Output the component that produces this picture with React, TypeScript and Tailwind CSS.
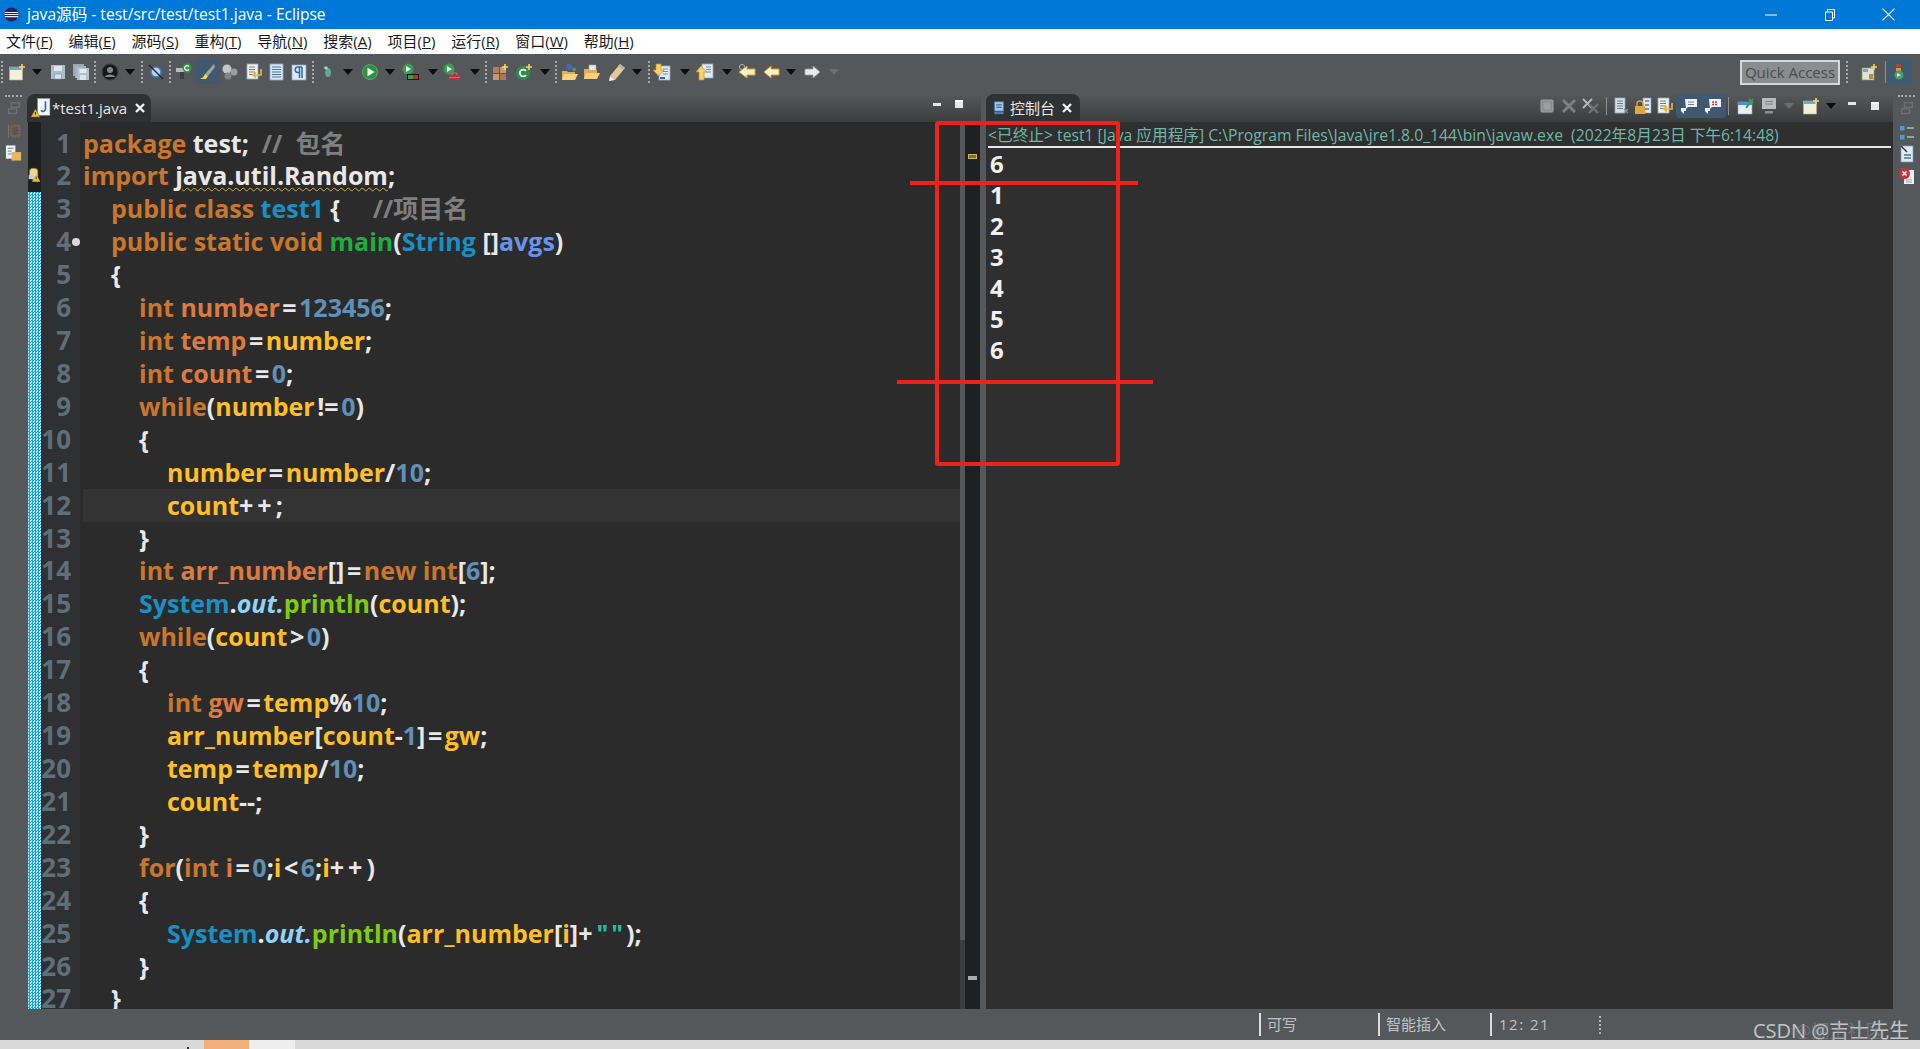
import type { ReactNode } from "react";

const UI_FONT = "font-['Open_Sans','Noto_Sans_CJK_SC',sans-serif]";
const CODE_FONT = "font-['Open_Sans','Noto_Sans_CJK_SC',sans-serif]";

function Svg({ children, className = "w-[18px] h-[18px]" }: { children: ReactNode; className?: string }) {
  return (
    <svg viewBox="0 0 18 18" className={`shrink-0 ${className}`}>
      {children}
    </svg>
  );
}

const Star = ({ x = 14, y = 4 }: { x?: number; y?: number }) => (
  <path d={`M${x} ${y - 3}v6M${x - 3} ${y}h6`} stroke="#f6d860" strokeWidth="1.6" />
);

const Doc = ({ x = 3, y = 2, w = 11, h = 14, fill = "#eef2f6" }: { x?: number; y?: number; w?: number; h?: number; fill?: string }) => (
  <rect x={x} y={y} width={w} height={h} fill={fill} stroke="#9aa7b5" strokeWidth="0.8" />
);

const Lines = ({ x = 5, y = 5, w = 7, n = 4, color = "#6d8fb5" }: { x?: number; y?: number; w?: number; n?: number; color?: string }) => (
  <path d={Array.from({ length: n }, (_, i) => `M${x} ${y + i * 2.5}h${w}`).join("")} stroke={color} strokeWidth="1" />
);

const ICONS: Record<string, ReactNode> = {
  newDoc: (
    <Svg>
      <rect x="1.5" y="4" width="13" height="13" fill="#f3f0d8" stroke="#b9b28a" strokeWidth="0.6" />
      <rect x="1.5" y="4" width="13" height="3" fill="#6fa6dc" />
      <Star />
    </Svg>
  ),
  save: (
    <Svg>
      <rect x="2" y="2" width="14" height="14" fill="#a9bdd2" />
      <rect x="5" y="3" width="8" height="5" fill="#e4e8ec" />
      <rect x="5.5" y="11" width="7" height="5" fill="#dfe3e7" stroke="#7f93a8" strokeWidth="0.7" />
    </Svg>
  ),
  saveAll: (
    <Svg>
      <rect x="1" y="1" width="11" height="12" fill="#9ca7b2" />
      <rect x="3" y="3" width="11" height="12" fill="#a4b2c0" />
      <rect x="5" y="5" width="12" height="12" fill="#afc0d2" />
      <rect x="7.5" y="6" width="7" height="4" fill="#e4e8ec" />
      <rect x="8" y="12" width="6" height="5" fill="#dfe3e7" />
    </Svg>
  ),
  person: (
    <Svg>
      <circle cx="9" cy="9" r="8" fill="#17181a" stroke="#3b3d3f" />
      <circle cx="9" cy="7" r="3" fill="#85888b" />
      <path d="M3.8 14c1-3.4 9.4-3.4 10.4 0" fill="#85888b" />
    </Svg>
  ),
  skip: (
    <Svg>
      <circle cx="9" cy="9" r="5" fill="#b8d3ee" stroke="#3f7fc0" strokeWidth="1.6" />
      <path d="M2 2l14 14" stroke="#23262a" strokeWidth="1.3" />
    </Svg>
  ),
  gear: (
    <Svg>
      <rect x="1" y="5" width="9" height="4" fill="#b9bcbf" />
      <rect x="5" y="9" width="4" height="7" fill="#3c3e40" />
      <circle cx="12" cy="5" r="4.5" fill="#2e9b4a" />
      <path d="M14 3.6a2.4 2.4 0 1 0 0 2.8" fill="none" stroke="#fff" strokeWidth="1.2" />
    </Svg>
  ),
  blobs: (
    <Svg>
      <circle cx="6" cy="6" r="4.5" fill="#c4c6c8" />
      <circle cx="13" cy="9" r="3.5" fill="#9a9c9e" />
      <circle cx="7" cy="13" r="3.5" fill="#828486" />
    </Svg>
  ),
  docArrow: (
    <Svg>
      <Doc x={2} y={1} w={11} h={15} />
      <Lines x={4} y={4} w={6} n={4} color="#8a7a55" />
      <path d="M16 6v6h-7M11 9.5L8 12l3 2.5" fill="none" stroke="#e7b53c" strokeWidth="1.7" />
    </Svg>
  ),
  docList: (
    <Svg>
      <Doc x={3} y={1} w={13} h={16} fill="#d7e6f5" />
      <Lines x={5} y={4} w={9} n={5} color="#4b79ad" />
    </Svg>
  ),
  pilcrow: (
    <Svg>
      <rect x="2" y="2" width="14" height="15" fill="#dce9f6" stroke="#8fa7c0" strokeWidth="0.7" />
      <path d="M12 4H8a2.8 2.8 0 0 0 0 5.6h1M9.5 4v11M12 4v11" fill="none" stroke="#2f6aa8" strokeWidth="1.5" />
    </Svg>
  ),
  bug: (
    <Svg>
      <ellipse cx="9" cy="9.5" rx="3" ry="4.5" fill="#5fa899" />
      <circle cx="7" cy="5" r="1.8" fill="#9fd0c4" />
      <path d="M4 6l3 2M4 14l3-2M14 8l-2 1M14 13l-2-1" stroke="#2e6f63" strokeWidth="1" />
    </Svg>
  ),
  run: (
    <Svg>
      <circle cx="9" cy="9" r="7.5" fill="#2f8f48" stroke="#5db470" strokeWidth="0.8" />
      <path d="M6.5 4.5L13.5 9l-7 4.5z" fill="#eefbe8" />
    </Svg>
  ),
  coverage: (
    <Svg>
      <circle cx="6" cy="6" r="5.5" fill="#3b9a54" />
      <path d="M4 3l5 3-5 3z" fill="#eefbe8" />
      <rect x="5" y="11" width="12" height="6" fill="#111" />
      <rect x="6" y="12" width="5" height="4" fill="#29a83c" />
      <rect x="11" y="12" width="5" height="4" fill="#cc2a2a" />
    </Svg>
  ),
  external: (
    <Svg>
      <circle cx="6" cy="6" r="5.5" fill="#3b9a54" />
      <path d="M4 3l5 3-5 3z" fill="#eefbe8" />
      <rect x="6" y="12" width="11" height="5" rx="1" fill="#c82c35" />
      <path d="M9 12v-2h5v2M6 14.5h11" fill="none" stroke="#e4676d" strokeWidth="1" />
    </Svg>
  ),
  pkg: (
    <Svg>
      <rect x="2" y="4" width="6" height="6" fill="#b07f5c" />
      <rect x="9" y="4" width="6" height="6" fill="#c79770" />
      <rect x="2" y="11" width="6" height="6" fill="#c79770" />
      <rect x="9" y="11" width="6" height="6" fill="#a97856" />
      <Star />
    </Svg>
  ),
  newClass: (
    <Svg>
      <circle cx="8" cy="10" r="7" fill="#2e8b4d" />
      <path d="M11 8a3.4 3.4 0 1 0 0 4" fill="none" stroke="#fff" strokeWidth="1.7" />
      <Star x={14} y={4} />
    </Svg>
  ),
  openProject: (
    <Svg>
      <circle cx="8" cy="4" r="3" fill="#4f62b8" />
      <circle cx="13" cy="6.5" r="2" fill="#3f9a70" />
      <path d="M1 8h5l1 1h7v7H1z" fill="#e0ad55" />
      <path d="M3 11h14l-3 6H1z" fill="#f5d27e" />
    </Svg>
  ),
  openFolder: (
    <Svg>
      <rect x="6" y="2" width="7" height="6" fill="#e8eef4" stroke="#93a5b8" strokeWidth="0.6" />
      <path d="M1 6h5l1 1h7v9H1z" fill="#e0ad55" />
      <path d="M3 10h14l-3 6H1z" fill="#f5d27e" />
    </Svg>
  ),
  pencil: (
    <Svg>
      <path d="M12 1l5 4L7 17l-5-4z" fill="#e3c89b" />
      <path d="M12 1l5 4-2 2-5-4z" fill="#b9b2a4" />
      <path d="M2 13l5 4-6 1z" fill="#f7f7e0" />
    </Svg>
  ),
  docDown: (
    <Svg>
      <Doc x={6} y={3} w={11} h={14} fill="#dfe9f3" />
      <Lines x={10} y={6} w={5} n={3} color="#6d8fb5" />
      <rect x="7" y="14" width="5" height="2" fill="#2f6aa8" />
      <path d="M3 1h5v6h3l-5.5 6L0 7h3z" fill="#f6d26a" stroke="#c98d1f" strokeWidth="0.7" />
    </Svg>
  ),
  docUp: (
    <Svg>
      <Doc x={6} y={1} w={11} h={14} fill="#dfe9f3" />
      <Lines x={10} y={4} w={5} n={3} color="#6d8fb5" />
      <path d="M5 3l5.5 6H8v8H3V9H0z" fill="#f6d26a" stroke="#c98d1f" strokeWidth="0.7" />
    </Svg>
  ),
  backEdit: (
    <Svg>
      <circle cx="4" cy="4" r="2.6" fill="none" stroke="#9fb0c0" strokeWidth="1" />
      <path d="M9 3v3h8v6H9v3L1 9z" fill="#faf2c8" stroke="#d99a2b" strokeWidth="1" />
    </Svg>
  ),
  back: (
    <Svg>
      <path d="M9 3v3h8v6H9v3L2 9z" fill="#faf2c8" stroke="#d99a2b" strokeWidth="1" />
    </Svg>
  ),
  forward: (
    <Svg>
      <path d="M9 3v3H1v6h8v3l7-6z" fill="#e8ebed" stroke="#9a9da0" strokeWidth="0.8" />
    </Svg>
  ),
  perspective: (
    <Svg>
      <rect x="2" y="5" width="12" height="12" fill="#dfe3d0" stroke="#8c9078" strokeWidth="0.7" />
      <rect x="3" y="6" width="5" height="3" fill="#6fa6dc" />
      <rect x="9" y="11" width="4" height="5" fill="#b08a50" />
      <Star />
    </Svg>
  ),
  debugPersp: (
    <Svg>
      <rect x="5" y="1" width="5" height="3" fill="#a94b3c" />
      <rect x="5" y="5" width="5" height="3" fill="#c9a13f" />
      <circle cx="8" cy="12" r="4.5" fill="#4f9a6a" />
      <path d="M6 10l4 2-4 2z" fill="#d9e6f5" />
    </Svg>
  ),
  terminate: (
    <Svg>
      <rect x="3" y="3" width="12" height="12" rx="1" fill="#8b8d8f" stroke="#a2a4a6" />
      <rect x="5.5" y="5.5" width="7" height="7" fill="#9c9ea0" />
    </Svg>
  ),
  remove: (
    <Svg>
      <path d="M3 3l12 12M15 3L3 15" stroke="#7d7f81" strokeWidth="3" />
    </Svg>
  ),
  removeAll: (
    <Svg>
      <path d="M1 2l9 9M10 2l-9 9" stroke="#b4b6b8" strokeWidth="2" />
      <path d="M7 7l9 9M16 7l-9 9" stroke="#6f7173" strokeWidth="2.4" />
    </Svg>
  ),
  docClear: (
    <Svg>
      <Doc x={3} y={1} w={10} h={15} fill="#d5dee8" />
      <Lines x={5} y={4} w={6} n={4} color="#5d7c9c" />
      <path d="M12 12l4 4M16 12l-4 4" stroke="#8c8e90" strokeWidth="1.2" />
    </Svg>
  ),
  lock: (
    <Svg>
      <rect x="9" y="1" width="8" height="15" fill="#e1e7ee" stroke="#8fa0b2" strokeWidth="0.6" />
      <path d="M11 4h4M11 8h4M11 12h4" stroke="#5d7c9c" strokeWidth="1.5" />
      <path d="M3 9V7a3 3 0 0 1 6 0v2" fill="none" stroke="#d5a04a" strokeWidth="1.4" />
      <rect x="1" y="9" width="10" height="8" fill="#e2a83c" />
    </Svg>
  ),
  commentOut: (
    <Svg>
      <path d="M5 2h12v8H8l-2 2z" fill="#f2f6fa" />
      <path d="M8 5h6M8 7.5h6" stroke="#5b86b3" strokeWidth="1" />
      <path d="M1 11h5v3H4v3l-3-3z" fill="#f2f6fa" />
    </Svg>
  ),
  commentErr: (
    <Svg>
      <path d="M5 2h12v8H8l-2 2z" fill="#f2f6fa" />
      <path d="M8 5h6M8 7.5h6" stroke="#d2303a" strokeWidth="1.6" strokeDasharray="2 1" />
      <path d="M1 11h5v3H4v3l-3-3z" fill="#f2f6fa" />
    </Svg>
  ),
  pin: (
    <Svg>
      <rect x="1" y="5" width="14" height="12" fill="#e8f0f8" stroke="#8fa7c0" strokeWidth="0.6" />
      <rect x="1" y="5" width="14" height="3" fill="#4f8fd0" />
      <path d="M9 11l7-9M12 2l4 4" stroke="#35a04e" strokeWidth="2" />
    </Svg>
  ),
  monitor: (
    <Svg>
      <rect x="2" y="1" width="14" height="11" fill="#b9bcbf" />
      <path d="M5 4.5h8M5 7h8" stroke="#7f8184" strokeWidth="1" />
      <rect x="5" y="14" width="8" height="2.5" fill="#8b8d8f" />
    </Svg>
  ),
  consoleTab: (
    <Svg className="w-[14px] h-[16px]">
      <rect x="3" y="1" width="12" height="12" fill="#a6c4e6" stroke="#3c6ea6" strokeWidth="1" />
      <path d="M5.5 5h7M5.5 8h7" stroke="#1f4f85" strokeWidth="1.2" />
      <rect x="3" y="14" width="12" height="3" fill="#4b7db5" />
    </Svg>
  ),
  javaFile: (
    <Svg className="w-[20px] h-[22px]">
      <rect x="6" y="0.5" width="11" height="15" fill="#f3f6fa" stroke="#8fa0b2" strokeWidth="0.5" />
      <path d="M13 3v7c0 2.5-3 2.5-4 1" fill="none" stroke="#2f6fb5" strokeWidth="1.5" />
      <path d="M0 17L4 10l4 7z" fill="#f2c24a" stroke="#7b5c14" strokeWidth="0.5" />
      <path d="M4 12.5v2.5" stroke="#333" strokeWidth="1" />
    </Svg>
  ),
  warn: (
    <Svg className="w-[15px] h-[18px]">
      <rect x="3" y="1" width="10" height="13" rx="4" fill="#efd98f" stroke="#8a7742" strokeWidth="0.8" />
      <rect x="2" y="9" width="7" height="5" fill="#c8cfd6" />
      <path d="M11 8l5 9H6z" fill="#f2b83a" />
      <path d="M11 11v3" stroke="#333" strokeWidth="1" />
    </Svg>
  ),
  dimRestore: (
    <Svg className="w-[16px] h-[16px]">
      <rect x="6" y="2" width="9" height="5" fill="none" stroke="#6f7275" strokeWidth="1.4" />
      <rect x="3" y="9" width="9" height="5" fill="none" stroke="#6f7275" strokeWidth="1.4" />
    </Svg>
  ),
  rail1: (
    <Svg className="w-[16px] h-[18px]">
      <path d="M3 2v14" stroke="#7b7e81" strokeWidth="1" />
      <rect x="6" y="3" width="9" height="12" fill="none" stroke="#8a5f45" strokeWidth="3" strokeDasharray="2 1" />
    </Svg>
  ),
  railPkg: (
    <Svg className="w-[17px] h-[18px]">
      <rect x="1" y="1" width="10" height="14" fill="#eef2f6" />
      <path d="M3 4h6M3 7h4M3 10h4" stroke="#5d7c9c" strokeWidth="1" />
      <rect x="7" y="8" width="10" height="9" fill="#e8b860" />
    </Svg>
  ),
  outline: (
    <Svg>
      <rect x="2" y="2" width="4.5" height="4.5" fill="#4b97e0" />
      <rect x="2" y="11" width="4.5" height="4.5" fill="#4b97e0" />
      <path d="M9 4h7M9 13h7" stroke="#dce8f4" strokeWidth="1.2" />
    </Svg>
  ),
  javadoc: (
    <Svg>
      <rect x="3" y="1" width="12" height="16" fill="#dfeaf5" stroke="#7f9ab5" strokeWidth="0.7" />
      <path d="M3 1l6 6" stroke="#333" strokeWidth="1.4" />
      <path d="M6 10h7M6 13h7" stroke="#4b79ad" strokeWidth="1.3" />
    </Svg>
  ),
  problems: (
    <Svg>
      <rect x="6" y="3" width="10" height="14" fill="#eef2f6" />
      <path d="M8 13h6M8 15h6" stroke="#9aa7b5" strokeWidth="1" />
      <circle cx="6.5" cy="6.5" r="5.5" fill="#c83238" />
      <path d="M4.5 4.5l4 4M8.5 4.5l-4 4" stroke="#fff" strokeWidth="1.4" />
    </Svg>
  ),
};

function Arrow({ dim = false }: { dim?: boolean }) {
  return (
    <svg viewBox="0 0 10 6" className="w-[10px] h-[6px] shrink-0">
      <path d="M0 0h10L5 6z" fill={dim ? "#6b6e71" : "#0c0c0c"} />
    </svg>
  );
}

function Sep() {
  return <div className="w-[2px] h-[22px] shrink-0 border-l-2 border-dotted border-[#a6a8aa]" />;
}

type ToolItem = { kind: string; ml: string };

const TOOLBAR: ToolItem[] = [
  { kind: "sep", ml: "ml-[1px]" },
  { kind: "newDoc", ml: "ml-[5px]" },
  { kind: "arrow", ml: "ml-[6px]" },
  { kind: "save", ml: "ml-[7px]" },
  { kind: "saveAll", ml: "ml-[5px]" },
  { kind: "sep", ml: "ml-[4px]" },
  { kind: "person", ml: "ml-[5px]" },
  { kind: "arrow", ml: "ml-[6px]" },
  { kind: "sep", ml: "ml-[6px]" },
  { kind: "skip", ml: "ml-[4px]" },
  { kind: "sep", ml: "ml-[4px]" },
  { kind: "gear", ml: "ml-[4px]" },
  { kind: "brushOn", ml: "ml-[3px]" },
  { kind: "blobs", ml: "ml-[1px]" },
  { kind: "docArrow", ml: "ml-[6px]" },
  { kind: "docList", ml: "ml-[4px]" },
  { kind: "pilcrow", ml: "ml-[5px]" },
  { kind: "sep", ml: "ml-[4px]" },
  { kind: "bug", ml: "ml-[5px]" },
  { kind: "arrow", ml: "ml-[6px]" },
  { kind: "run", ml: "ml-[8px]" },
  { kind: "arrow", ml: "ml-[6px]" },
  { kind: "coverage", ml: "ml-[7px]" },
  { kind: "arrow", ml: "ml-[8px]" },
  { kind: "external", ml: "ml-[5px]" },
  { kind: "arrow", ml: "ml-[9px]" },
  { kind: "sep", ml: "ml-[5px]" },
  { kind: "pkg", ml: "ml-[4px]" },
  { kind: "newClass", ml: "ml-[6px]" },
  { kind: "arrow", ml: "ml-[7px]" },
  { kind: "sep", ml: "ml-[5px]" },
  { kind: "openProject", ml: "ml-[4px]" },
  { kind: "openFolder", ml: "ml-[4px]" },
  { kind: "pencil", ml: "ml-[7px]" },
  { kind: "arrow", ml: "ml-[6px]" },
  { kind: "sep", ml: "ml-[6px]" },
  { kind: "docDown", ml: "ml-[3px]" },
  { kind: "arrow", ml: "ml-[9px]" },
  { kind: "docUp", ml: "ml-[6px]" },
  { kind: "arrow", ml: "ml-[8px]" },
  { kind: "backEdit", ml: "ml-[6px]" },
  { kind: "back", ml: "ml-[6px]" },
  { kind: "arrow", ml: "ml-[6px]" },
  { kind: "forward", ml: "ml-[8px]" },
  { kind: "arrowDim", ml: "ml-[7px]" },
];

function ToolIcon({ kind }: { kind: string }) {
  if (kind === "sep") return <Sep />;
  if (kind === "arrow") return <Arrow />;
  if (kind === "arrowDim") return <Arrow dim />;
  if (kind === "brushOn") {
    return (
      <div className="w-[24px] h-[24px] flex items-center justify-center bg-[#3f5a70]">
        <Svg>
          <path d="M15 1L6 11l3 2 7-9z" fill="#a4a68f" />
          <path d="M6 11l3 2-2 3H1c3-1 4-3 5-5z" fill="#f1d94c" />
        </Svg>
      </div>
    );
  }
  return <>{ICONS[kind]}</>;
}

const MENUS = [
  ["文件", "F"],
  ["编辑", "E"],
  ["源码", "S"],
  ["重构", "T"],
  ["导航", "N"],
  ["搜索", "A"],
  ["项目", "P"],
  ["运行", "R"],
  ["窗口", "W"],
  ["帮助", "H"],
];

// token colours of the dark Eclipse theme
const C = {
  kw: "text-[#c9772f]",
  decl: "text-[#dc7a41]",
  id: "text-[#ffbf26]",
  op: "text-[#e8e8e8]",
  eq: "text-[#e8e8e8] px-[2.5px]",
  plus: "text-[#e8e8e8] tracking-[4px]",
  num: "text-[#5f90b8]",
  cm: "text-[#7f7f7f]",
  cls: "text-[#1a8fc4]",
  main: "text-[#1fae3e]",
  arg: "text-[#6a92e8]",
  out: "text-[#8fd3fa] italic",
  call: "text-[#7ecb14]",
  str: "text-[#17c4a0] tracking-[3px]",
};

type Token = [string, string];
type Line = { indent: number; tokens: Token[] };

const CODE: Line[] = [
  { indent: 0, tokens: [["package ", C.kw], ["test;", C.op], ["  //  包名", C.cm]] },
  { indent: 0, tokens: [["import ", C.kw], ["java.util.Random", "squiggle"], [";", C.op]] },
  { indent: 1, tokens: [["public class ", C.kw], ["test1 ", C.cls], ["{", C.op], ["     //项目名", C.cm]] },
  { indent: 1, tokens: [["public static void ", C.kw], ["main", C.main], ["(", C.op], ["String ", C.cls], ["[]", C.op], ["avgs", C.arg], [")", C.op]] },
  { indent: 1, tokens: [["{", C.op]] },
  { indent: 2, tokens: [["int ", C.kw], ["number", C.decl], ["=", C.eq], ["123456", C.num], [";", C.op]] },
  { indent: 2, tokens: [["int ", C.kw], ["temp", C.decl], ["=", C.eq], ["number", C.id], [";", C.op]] },
  { indent: 2, tokens: [["int ", C.kw], ["count", C.decl], ["=", C.eq], ["0", C.num], [";", C.op]] },
  { indent: 2, tokens: [["while", C.kw], ["(", C.op], ["number", C.id], ["!=", C.eq], ["0", C.num], [")", C.op]] },
  { indent: 2, tokens: [["{", C.op]] },
  { indent: 3, tokens: [["number", C.id], ["=", C.eq], ["number", C.id], ["/", C.op], ["10", C.num], [";", C.op]] },
  { indent: 3, tokens: [["count", C.id], ["++", C.plus], [";", C.op]] },
  { indent: 2, tokens: [["}", C.op]] },
  { indent: 2, tokens: [["int ", C.kw], ["arr_number", C.decl], ["[]", C.op], ["=", C.eq], ["new int", C.kw], ["[", C.op], ["6", C.num], ["];", C.op]] },
  { indent: 2, tokens: [["System", C.cls], [".", C.op], ["out", C.out], [".", C.out], ["println", C.call], ["(", C.op], ["count", C.id], [");", C.op]] },
  { indent: 2, tokens: [["while", C.kw], ["(", C.op], ["count", C.id], [">", C.eq], ["0", C.num], [")", C.op]] },
  { indent: 2, tokens: [["{", C.op]] },
  { indent: 3, tokens: [["int ", C.kw], ["gw", C.decl], ["=", C.eq], ["temp", C.id], ["%", C.op], ["10", C.num], [";", C.op]] },
  { indent: 3, tokens: [["arr_number", C.id], ["[", C.op], ["count", C.id], ["-", C.op], ["1", C.num], ["]", C.op], ["=", C.eq], ["gw", C.id], [";", C.op]] },
  { indent: 3, tokens: [["temp", C.id], ["=", C.eq], ["temp", C.id], ["/", C.op], ["10", C.num], [";", C.op]] },
  { indent: 3, tokens: [["count", C.id], ["--;", C.op]] },
  { indent: 2, tokens: [["}", C.op]] },
  { indent: 2, tokens: [["for", C.kw], ["(", C.op], ["int ", C.kw], ["i", C.decl], ["=", C.eq], ["0", C.num], [";", C.op], ["i", C.id], ["<", C.eq], ["6", C.num], [";", C.op], ["i", C.id], ["++", C.plus], [")", C.op]] },
  { indent: 2, tokens: [["{", C.op]] },
  { indent: 3, tokens: [["System", C.cls], [".", C.op], ["out", C.out], [".", C.out], ["println", C.call], ["(", C.op], ["arr_number", C.id], ["[", C.op], ["i", C.id], ["]", C.op], ["+", C.plus], ['""', C.str], [");", C.op]] },
  { indent: 2, tokens: [["}", C.op]] },
  { indent: 1, tokens: [["}", C.op]] },
];

const INDENT = ["pl-0", "pl-[28px]", "pl-[56px]", "pl-[84px]"];
const HATCH =
  "bg-[repeating-conic-gradient(#1f9fd2_0_25%,#b5e6f5_0_50%)] [background-size:3px_3px]";

function CodeLine({ line, current }: { line: Line; current: boolean }) {
  return (
    <div className={`h-[32.93px] leading-[32.93px] whitespace-pre ${INDENT[line.indent]} ${current ? "bg-[#333333]" : ""}`}>
      {line.tokens.map(([text, cls], i) =>
        cls === "squiggle" ? (
          <span key={i} className="text-[#e8e8e8] underline decoration-wavy decoration-[#c9b152] decoration-1 underline-offset-2">
            {text}
          </span>
        ) : (
          <span key={i} className={cls}>
            {text}
          </span>
        )
      )}
    </div>
  );
}

function Editor() {
  return (
    <div className="w-[954px] flex flex-col">
      <div className="h-[28px] flex items-stretch bg-gradient-to-b from-[#55585a] to-[#3c3d3f] rounded-tl-lg">
        <div className="w-[124px] rounded-t-lg bg-[#2e3032] flex items-center pl-[4px] text-[15px] text-[#e6e6e6]">
          {ICONS.javaFile}
          <span className="ml-[1px]">*test1.java</span>
          <svg viewBox="0 0 10 10" className="w-[10px] h-[10px] ml-[8px]">
            <path d="M1 1l8 8M9 1L1 9" stroke="#f0f0f0" strokeWidth="2.4" />
          </svg>
        </div>
        <div className="flex-1" />
        <div className="flex items-center gap-[14px] pr-[18px] pb-[8px]">
          <div className="w-[8px] h-[3px] bg-[#e6e6e6]" />
          <div className="w-[8px] h-[8px] bg-[#e6e6e6] border-t-2 border-[#fff]" />
        </div>
      </div>
      <div className={`flex-1 flex bg-[#2b2b2b] overflow-hidden ${CODE_FONT} text-[25px] font-bold`}>
        <div className="w-[1px] bg-[#55585b]" />
        <div className="w-[13px] flex flex-col">
          <div className="h-[70px] bg-[#1d1f20] flex items-end justify-center pb-[8px]">{ICONS.warn}</div>
          <div className={`flex-1 ${HATCH}`} />
        </div>
        <div className="w-[39px] bg-[#2e3032] pt-[4.5px] text-[#5f6f79] relative text-[26px]">
          {CODE.map((_, i) => (
            <div key={i} className="h-[32.93px] leading-[32.93px] text-right pr-[9px]">
              {i + 1}
            </div>
          ))}
          <div className="absolute left-[31px] top-[116px] w-[8px] h-[8px] rounded-full bg-[#d9dcdf]" />
        </div>
        <div className="flex-1 min-w-0 pl-[3px] pt-[4.5px] overflow-hidden">
          {CODE.map((line, i) => (
            <CodeLine key={i} line={line} current={i === 11} />
          ))}
        </div>
        <div className="w-[5px] flex flex-col">
          <div className="h-[818px] bg-[#55585a]" />
          <div className="flex-1 bg-[#3b3d3f]" />
        </div>
        <div className="w-[15px] bg-[#1e2021] flex flex-col items-center">
          <div className="mt-[32px] w-[9px] h-[5px] border border-[#c9b850] bg-[#7d7430]" />
          <div className="mt-[817px] w-[9px] h-[4px] bg-[#a8abae]" />
        </div>
        <div className="w-[1px] bg-[#55585b]" />
      </div>
    </div>
  );
}

function ConsolePane() {
  const viewTools = ["terminate", "remove", "removeAll"];
  const outTools = ["docClear", "lock", "docArrow"];
  return (
    <div className="w-[907px] flex flex-col">
      <div className="h-[28px] flex items-stretch bg-gradient-to-b from-[#55585a] to-[#3c3d3f]">
        <div className="w-[94px] rounded-t-lg bg-[#2f3133] flex items-center pl-[6px] text-[15px] text-[#e6e6e6]">
          {ICONS.consoleTab}
          <span className="ml-[4px]">控制台</span>
          <svg viewBox="0 0 10 10" className="w-[10px] h-[10px] ml-[7px]">
            <path d="M1 1l8 8M9 1L1 9" stroke="#f0f0f0" strokeWidth="2.4" />
          </svg>
        </div>
        <div className="flex-1" />
        <div className="flex items-center pb-[4px] pr-[14px]">
          <div className="flex items-center gap-[4px]">
            {viewTools.map((k) => (
              <div key={k}>{ICONS[k]}</div>
            ))}
          </div>
          <div className="w-[1px] h-[18px] bg-[#8d9092] ml-[6px]" />
          <div className="flex items-center gap-[4px] ml-[5px]">
            {outTools.map((k) => (
              <div key={k}>{ICONS[k]}</div>
            ))}
          </div>
          <div className="flex items-center gap-[6px] h-[24px] px-[4px] ml-[2px] bg-[#3f5a70] rounded-sm">
            {ICONS.commentOut}
            {ICONS.commentErr}
          </div>
          <div className="w-[1px] h-[18px] bg-[#8d9092] ml-[2px]" />
          <div className="ml-[8px]">{ICONS.pin}</div>
          <div className="ml-[5px]">{ICONS.monitor}</div>
          <div className="ml-[6px]">
            <Arrow dim />
          </div>
          <div className="ml-[8px]">{ICONS.newDoc}</div>
          <div className="ml-[6px]">
            <Arrow />
          </div>
          <div className="w-[8px] h-[3px] bg-[#e6e6e6] ml-[12px] mb-[6px]" />
          <div className="w-[8px] h-[8px] bg-[#e6e6e6] border-t-2 border-[#fff] ml-[15px]" />
        </div>
      </div>
      <div className={`flex-1 bg-[#2f2f2f] ${UI_FONT} overflow-hidden`}>
        <div className="h-[26px] ml-[2px] mr-[2px] border-b-2 border-[#e8e8e8] text-[15.7px] leading-[27px] text-[#6fb6a7] whitespace-pre">
          {"<已终止> test1 [Java 应用程序] C:\\Program Files\\Java\\jre1.8.0_144\\bin\\javaw.exe  (2022年8月23日 下午6:14:48)"}
        </div>
        <div className="pl-[4px] text-[24px] font-bold text-[#f0f0f0]">
          {[6, 1, 2, 3, 4, 5, 6].map((n, i) => (
            <div key={i} className="h-[31px] leading-[31px]">
              {n}
            </div>
          ))}
        </div>
      </div>
    </div>
  );
}

export default function App() {
  return (
    <div className={`relative w-[1920px] h-[1049px] overflow-hidden flex flex-col bg-[#55585b] ${UI_FONT}`}>
      {/* title bar */}
      <div className="h-[29px] bg-[#0078d7] flex items-center text-white text-[15.6px]">
        <svg viewBox="0 0 18 18" className="w-[15px] h-[15px] ml-[4px]">
          <circle cx="9" cy="9" r="8.5" fill="#2c2255" />
          <path d="M1 6.5h16M0.5 9h17M1 11.5h16" stroke="#e8e6f2" strokeWidth="1.3" />
        </svg>
        <span className="ml-[8px]">java源码 - test/src/test/test1.java - Eclipse</span>
        <div className="flex-1" />
        <svg viewBox="0 0 12 12" className="w-[12px] h-[12px]">
          <path d="M0 6h12" stroke="#fff" strokeWidth="1" />
        </svg>
        <svg viewBox="0 0 12 12" className="w-[12px] h-[12px] ml-[46px]">
          <path d="M2.5 3h7v8.5h-7zM4.5 3V0.5h7v8.5h-2" fill="none" stroke="#fff" strokeWidth="1" />
        </svg>
        <svg viewBox="0 0 12 12" className="w-[13px] h-[13px] ml-[47px] mr-[25px]">
          <path d="M0.5 0.5l11 11M11.5 0.5l-11 11" stroke="#fff" strokeWidth="1" />
        </svg>
      </div>
      {/* menu bar */}
      <div className="h-[25px] bg-white flex items-center pl-[6px] gap-[15.8px] text-[15px] text-[#1a1a1a]">
        {MENUS.map(([label, key]) => (
          <span key={key} className="whitespace-pre">
            {label}(<span className="underline">{key}</span>)
          </span>
        ))}
      </div>
      {/* main toolbar */}
      <div className="h-[40px] bg-[#55585b] flex items-center pb-[4px]">
        {TOOLBAR.map((item, i) => (
          <div key={i} className={`shrink-0 ${item.ml}`}>
            <ToolIcon kind={item.kind} />
          </div>
        ))}
        <div className="flex-1" />
        <div className="w-[100px] h-[25px] border-2 border-[#d5d7d9] bg-[#8a8c8e] text-[15px] leading-[21px] text-center whitespace-nowrap text-[#4b4e51]">
          Quick Access
        </div>
        <div className="ml-[6px]">
          <Sep />
        </div>
        <div className="ml-[12px]">{ICONS.perspective}</div>
        <div className="w-[1px] h-[22px] bg-[#8d9092] ml-[7px]" />
        <div className="w-[24px] h-[28px] ml-[2px] mr-[8px] bg-[#3f5a70] flex items-center justify-center">{ICONS.debugPersp}</div>
      </div>
      {/* workbench */}
      <div className="h-[915px] flex">
        <div className="w-[27px] flex flex-col items-center pt-[1px]">
          <div className="w-[17px] h-[2px] border-t-2 border-dotted border-[#a6a8aa]" />
          <div className="mt-[4px]">{ICONS.dimRestore}</div>
          <div className="mt-[5px]">{ICONS.rail1}</div>
          <div className="mt-[4px]">{ICONS.railPkg}</div>
        </div>
        <Editor />
        <div className="w-[5px]" />
        <ConsolePane />
        <div className="w-[27px] flex flex-col items-center pt-[1px]">
          <div className="w-[17px] h-[2px] border-t-2 border-dotted border-[#a6a8aa]" />
          <div className="mt-[4px]">{ICONS.dimRestore}</div>
          <div className="mt-[7px]">{ICONS.outline}</div>
          <div className="mt-[3px]">{ICONS.javadoc}</div>
          <div className="mt-[4px]">{ICONS.problems}</div>
        </div>
      </div>
      {/* status bar */}
      <div className="h-[31px] flex items-center text-[15px] text-[#bfc3c5]">
        <div className="ml-[1259px] w-[119px] h-[23px] border-l-2 border-[#dcdcdc] pl-[6px] leading-[23px]">可写</div>
        <div className="w-[112px] h-[23px] border-l-2 border-[#dcdcdc] pl-[6px] leading-[23px]">智能插入</div>
        <div className="w-[109px] h-[23px] border-l-2 border-[#dcdcdc] pl-[7px] leading-[23px] tracking-[1.5px]">12: 21</div>
        <div className="h-[18px] border-l-2 border-dotted border-[#b0b3b5]" />
      </div>
      {/* task bar sliver */}
      <div className="h-[9px] bg-[#d9d9d9] flex">
        <div className="ml-[187px] mt-[7px] w-[2px] h-[2px] bg-[#333333]" />
        <div className="ml-[15px] w-[45px] bg-[#f4ae78]" />
        <div className="w-[46px] bg-[#eeeeee]" />
      </div>

      {/* red hand-drawn annotation */}
      <div className="absolute left-[935px] top-[121px] w-[185px] h-[345px] border-[4px] border-[#f0201a] rounded-[3px]" />
      <div className="absolute left-[910px] top-[181px] w-[228px] h-[4px] bg-[#f0201a]" />
      <div className="absolute left-[897px] top-[380px] w-[256px] h-[4px] bg-[#f0201a]" />

      {/* watermark */}
      <div className="absolute left-[1753px] top-[1016px] text-[20px] text-[#c3c5c7] whitespace-pre">CSDN @吉士先生</div>
      <div className="absolute left-[1795px] top-[1018px] text-[18px] text-[#8d9092]/50 whitespace-pre">@掘土社区</div>
    </div>
  );
}
